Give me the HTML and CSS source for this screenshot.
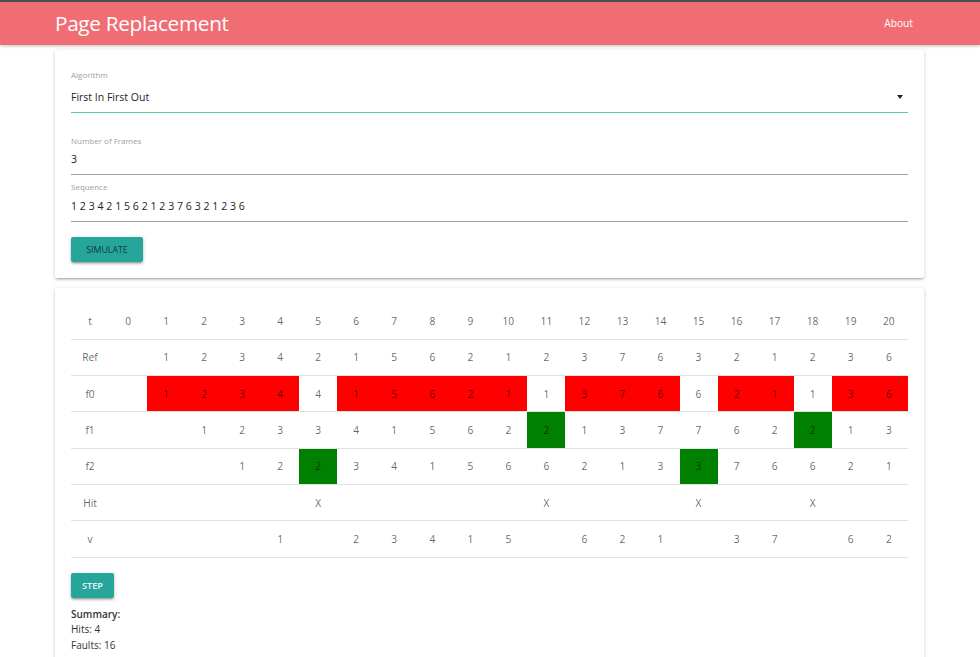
FILE: index.html
```html
<!DOCTYPE html>
<html lang="en">
<head>
<meta charset="utf-8">
<title>Page Replacement</title>
<link rel="stylesheet" href="styles.css">
</head>
<body>
<header class="nav">
  <div class="nav-inner">
    <span class="brand">Page Replacement</span>
    <a class="nav-link" href="#">About</a>
  </div>
</header>
<main class="container">
  <section class="card form-card">
    <div class="field field-select">
      <div class="field-label">Algorithm</div>
      <div class="field-value select-value"><span>First In First Out</span><span class="caret"></span></div>
    </div>
    <div class="field field-frames">
      <div class="field-label">Number of Frames</div>
      <div class="field-value">3</div>
    </div>
    <div class="field field-seq">
      <div class="field-label">Sequence</div>
      <div class="field-value">1 2 3 4 2 1 5 6 2 1 2 3 7 6 3 2 1 2 3 6</div>
    </div>
    <button class="btn btn-dark-text">SIMULATE</button>
  </section>
  <section class="card result-card">
    <table class="grid">
      <tbody>
        <tr class="head"><td>t</td><td>0</td><td>1</td><td>2</td><td>3</td><td>4</td><td>5</td><td>6</td><td>7</td><td>8</td><td>9</td><td>10</td><td>11</td><td>12</td><td>13</td><td>14</td><td>15</td><td>16</td><td>17</td><td>18</td><td>19</td><td>20</td></tr>
        <tr><td>Ref</td><td></td><td>1</td><td>2</td><td>3</td><td>4</td><td>2</td><td>1</td><td>5</td><td>6</td><td>2</td><td>1</td><td>2</td><td>3</td><td>7</td><td>6</td><td>3</td><td>2</td><td>1</td><td>2</td><td>3</td><td>6</td></tr>
        <tr><td>f0</td><td></td><td class="fault">1</td><td class="fault">2</td><td class="fault">3</td><td class="fault">4</td><td>4</td><td class="fault">1</td><td class="fault">5</td><td class="fault">6</td><td class="fault">2</td><td class="fault">1</td><td>1</td><td class="fault">3</td><td class="fault">7</td><td class="fault">6</td><td>6</td><td class="fault">2</td><td class="fault">1</td><td>1</td><td class="fault">3</td><td class="fault">6</td></tr>
        <tr><td>f1</td><td></td><td></td><td>1</td><td>2</td><td>3</td><td>3</td><td>4</td><td>1</td><td>5</td><td>6</td><td>2</td><td class="hit">2</td><td>1</td><td>3</td><td>7</td><td>7</td><td>6</td><td>2</td><td class="hit">2</td><td>1</td><td>3</td></tr>
        <tr><td>f2</td><td></td><td></td><td></td><td>1</td><td>2</td><td class="hit">2</td><td>3</td><td>4</td><td>1</td><td>5</td><td>6</td><td>6</td><td>2</td><td>1</td><td>3</td><td class="hit">3</td><td>7</td><td>6</td><td>6</td><td>2</td><td>1</td></tr>
        <tr><td>Hit</td><td></td><td></td><td></td><td></td><td></td><td>X</td><td></td><td></td><td></td><td></td><td></td><td>X</td><td></td><td></td><td></td><td>X</td><td></td><td></td><td>X</td><td></td><td></td></tr>
        <tr><td>v</td><td></td><td></td><td></td><td></td><td>1</td><td></td><td>2</td><td>3</td><td>4</td><td>1</td><td>5</td><td></td><td>6</td><td>2</td><td>1</td><td></td><td>3</td><td>7</td><td></td><td>6</td><td>2</td></tr>
      </tbody>
    </table>
    <button class="btn btn-light-text">STEP</button>
    <div class="summary">
      <div class="summary-title">Summary:</div>
      <div>Hits: 4</div>
      <div>Faults: 16</div>
    </div>
  </section>
</main>
</body>
</html>
```
FILE: styles.css
```css
* { box-sizing: border-box; }
html, body {
  margin: 0;
  padding: 0;
  background: #ffffff;
  font-family: "Open Sans", "Noto Sans", sans-serif;
  color: #333;
  overflow: hidden;
}
.nav {
  border-top: 2px solid #4d4d4d;
  height: 45px;
  background: #f06e73;
  box-shadow: 0 1px 3px rgba(0,0,0,0.25);
  position: relative;
  z-index: 2;
}
.nav-inner {
  width: 869px;
  margin-left: 55px;
  height: 43px;
  display: flex;
  align-items: center;
  justify-content: space-between;
}
.brand {
  color: #fff;
  font-size: 20.8px;
  line-height: 43px;
  letter-spacing: -0.35px;
}
.nav-link {
  color: #fff;
  text-decoration: none;
  font-size: 10.2px;
  padding: 0 11px;
  margin-top: -2px;
}
.container {
  width: 869px;
  margin: 5px 0 0 55px;
  display: flex;
  flex-direction: column;
  gap: 10px;
}
.card {
  background: #fff;
  border-radius: 2px;
  box-shadow: 0 2px 2px 0 rgba(0,0,0,0.10), 0 3px 1px -2px rgba(0,0,0,0.10), 0 1px 4px 0 rgba(0,0,0,0.16);
  padding: 0 16px;
}
.form-card {
  padding-top: 19px;
  padding-bottom: 16px;
}
.field { border-bottom: 1px solid #9e9e9e; }
.field-label {
  font-size: 8px;
  line-height: 12px;
  color: #9e9e9e;
}
.field-value {
  font-size: 10.5px;
  line-height: 20px;
  color: #222;
  padding-bottom: 5px;
}
.field-select { border-bottom-color: #5fc3b8; }
.field-select .field-value { padding-top: 6px; }
.select-value {
  display: flex;
  justify-content: space-between;
  align-items: center;
}
.caret {
  width: 0;
  height: 0;
  border-left: 3.5px solid transparent;
  border-right: 3.5px solid transparent;
  border-top: 4px solid #222;
  margin-right: 5px;
}
.field-frames { margin-top: 22px; }
.field-frames .field-value { padding-top: 2px; }
.field-seq { margin-top: 6px; }
.field-seq .field-value { padding-top: 3px; letter-spacing: 0.05px; }
.btn {
  display: block;
  border: none;
  background: #26a69a;
  border-radius: 2px;
  height: 25px;
  font-family: inherit;
  font-size: 8.8px;
  padding: 0;
  text-align: center;
  box-shadow: 0 2px 2px 0 rgba(0,0,0,0.14), 0 3px 1px -2px rgba(0,0,0,0.12), 0 1px 4px 0 rgba(0,0,0,0.2);
}
.btn-dark-text {
  margin-top: 15px;
  width: 72px;
  color: #143a36;
}
.btn-light-text {
  margin-top: 15px;
  width: 43px;
  color: #e6f5f3;
  font-weight: 600;
  font-size: 9.2px;
}
.result-card {
  padding-top: 15px;
  padding-bottom: 20px;
}
.grid {
  width: 100%;
  table-layout: fixed;
  border-collapse: collapse;
}
.grid tr { border-bottom: 1px solid #e3e3e3; }
.grid td {
  height: 36.3px;
  padding: 0;
  text-align: center;
  font-size: 10.2px;
  color: rgba(0,0,0,0.62);
}
.grid td.fault { background: #ff0000; }
.grid td.hit { background: #008000; }
.summary {
  margin-top: 9px;
  font-size: 10px;
  line-height: 15.5px;
  color: #333;
}
.summary-title { font-weight: 600; }
```
